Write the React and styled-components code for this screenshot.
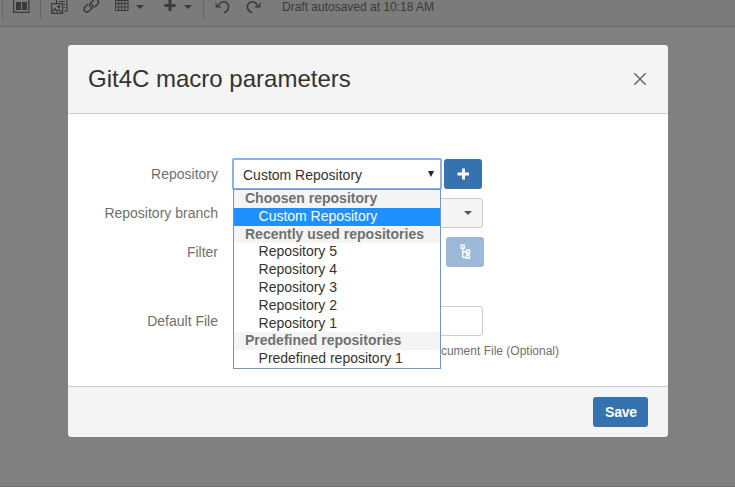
import React from "react";
import styled, { createGlobalStyle } from "styled-components";

const GlobalStyle = createGlobalStyle`
  * { box-sizing: border-box; }
  body { margin: 0; background: #808080; font-family: "Liberation Sans", Arial, sans-serif; font-size: 14px; overflow: hidden; }
`;

const Page = styled.div`
  display: flex;
  flex-direction: column;
  width: 735px;
  height: 487px;
  background: #808080;
  border-bottom: 1px solid #747474;
`;

const Toolbar = styled.div`
  display: flex;
  align-items: flex-start;
  height: 27px;
  flex: none;
  background: #7b7b7b;
  border-bottom: 1px solid #666;
  color: #3a3a3a;
`;

const ToolIcon = styled.svg`
  display: block;
  flex: none;
  width: ${(p) => p.$w}px;
  height: 20px;
  margin-left: ${(p) => p.$gap}px;
`;

const Divider = styled.span`
  flex: none;
  width: 1px;
  height: 19px;
  margin-left: ${(p) => p.$gap}px;
  background: #666;
`;

const DraftStatus = styled.span`
  margin-left: 21px;
  font-size: 12px;
  line-height: 14px;
  white-space: nowrap;
  color: #3a3a3a;
`;

const Dialog = styled.section`
  display: flex;
  flex-direction: column;
  width: 600px;
  height: 392px;
  margin: 18px 0 0 68px;
  border-radius: 4px;
  overflow: hidden;
  background: #fff;
`;

const DialogHeader = styled.header`
  display: flex;
  align-items: center;
  justify-content: space-between;
  height: 69px;
  padding: 0 20px;
  background: #f4f4f4;
  border-bottom: 1px solid #ccc;
`;

const Title = styled.h1`
  margin: 0;
  font-size: 24px;
  font-weight: 400;
  line-height: 28px;
  color: #333;
`;

const CloseButton = styled.button`
  display: flex;
  width: 16px;
  height: 16px;
  padding: 0;
  border: 0;
  background: none;
  color: #666;
`;

const Form = styled.div`
  display: flex;
  flex-direction: column;
  height: 272px;
  padding-top: 44px;
`;

const Row = styled.div`
  display: flex;
  align-items: center;
  height: 32px;
  margin-bottom: ${(p) => p.$after}px;
`;

const Label = styled.label`
  width: 150px;
  margin-right: 14px;
  text-align: right;
  line-height: 16px;
  color: #707070;
`;

const SelectBox = styled.div`
  position: relative;
  display: flex;
  align-items: center;
  justify-content: space-between;
  width: 210px;
  height: 32px;
  padding: 2px 6px 0 9px;
  border: 2px solid #8eb0e7;
  border-radius: 2px;
  color: #333;
`;

const SelectArrow = styled.svg`
  width: 6px;
  height: 6px;
  margin-bottom: 2px;
`;

const Menu = styled.div`
  position: absolute;
  z-index: 2;
  top: 29px;
  left: -1px;
  width: 208px;
  height: 180px;
  border: 1px solid #7196ce;
  background: #fff;
`;

const GroupName = styled.div`
  height: 17.8px;
  padding-left: 11px;
  line-height: 17px;
  font-weight: 700;
  white-space: nowrap;
  background: #f4f4f4;
  color: #707070;
`;

const Option = styled.div`
  height: 17.8px;
  padding-left: 24.6px;
  line-height: 17px;
  letter-spacing: -0.02px;
  white-space: nowrap;
  background: ${(p) => (p.$active ? "#1e90ff" : "#fff")};
  color: ${(p) => (p.$active ? "#fff" : "#333")};
`;

const IconButton = styled.button`
  display: flex;
  align-items: center;
  justify-content: center;
  width: 38px;
  height: 30px;
  padding: 0;
  margin-left: ${(p) => p.$gap}px;
  border: 0;
  border-radius: 3px;
  background: ${(p) => (p.$muted ? "#9cb9d9" : "#3572b0")};
  color: #fff;
`;

const Field = styled.div`
  display: flex;
  align-items: center;
  justify-content: flex-end;
  width: 250px;
  height: 30px;
  margin-left: 1px;
  padding-right: 10px;
  border: 1px solid #ccc;
  border-radius: 3px;
  background: ${(p) => (p.$shaded ? "#f4f4f4" : "#fff")};
  color: #555;
`;

const Hint = styled.p`
  margin: 0 109px 0 0;
  text-align: right;
  font-size: 12px;
  line-height: 14px;
  color: #707070;
`;

const DialogFooter = styled.footer`
  display: flex;
  align-items: center;
  justify-content: flex-end;
  height: 51px;
  padding-right: 20px;
  border-top: 1px solid #ccc;
  background: #f4f4f4;
`;

const SaveButton = styled.button`
  width: 55px;
  height: 30px;
  padding: 0 0 0 1px;
  border: 0;
  border-radius: 3px;
  background: #3572b0;
  color: #fff;
  font: 700 14px "Liberation Sans", Arial, sans-serif;
  letter-spacing: -0.2px;
`;

const Caret = ({ gap }) => (
  <ToolIcon $w={8} $gap={gap} viewBox="0 0 8 20"><path d="M0 5h8L4 9z" fill="currentColor" /></ToolIcon>
);

const groups = [
  { name: "Choosen repository", items: ["Custom Repository"] },
  { name: "Recently used repositories", items: ["Repository 5", "Repository 4", "Repository 3", "Repository 2", "Repository 1"] },
  { name: "Predefined repositories", items: ["Predefined repository 1"] },
];

function EditorToolbar() {
  return (
    <Toolbar>
      <Divider $gap={2} />
      <ToolIcon $w={17} $gap={10} viewBox="0 0 17 20">
        <path d="M.6-2v14.4h15.3V-2" fill="none" stroke="currentColor" strokeWidth="1.2" />
        <path d="M3 2h5v8H3zM9 2h5v8H9z" fill="currentColor" />
      </ToolIcon>
      <Divider $gap={10} />
      <ToolIcon $w={17} $gap={10} viewBox="0 0 17 20" fill="none" stroke="currentColor" strokeWidth="1.2">
        <path d="M5.5 3v-4h10.4v12H13M8 1.5h6M12.5 4.5h1.8M12.5 7.5h1.8" />
        <rect x=".6" y="3.6" width="11" height="9.8" />
        <path d="m1 12 3-3.4 2 3 2-2 3 3.4" /><circle cx="7.9" cy="6.6" r="1" />
      </ToolIcon>
      <ToolIcon $w={17} $gap={15} viewBox="0 0 17 20" fill="none" stroke="currentColor" strokeWidth="1.6" strokeLinecap="round">
        <path d="M7.4 6.8C6.2 5.6 6.3 4.3 7.4 3.2l3-3c2.8-2.8 7 .9 4.3 3.8L12 6.7" />
        <path d="M9 4.3c1.2 1.2 1.1 2.6 0 3.7l-3 3c-2.8 2.8-6.9-1-4.2-3.8l2.5-2.5" />
      </ToolIcon>
      <ToolIcon $w={14} $gap={15} viewBox="0 0 14 20" fill="none" stroke="currentColor" strokeWidth="1">
        <path d="M.5 .5h12.5v10H.5zM0 3.5h13.5M0 7h13.5M3.7.5v10M6.8.5v10M9.9.5v10" />
      </ToolIcon>
      <Caret gap={7} />
      <ToolIcon $w={12} $gap={20} viewBox="0 0 12 20" fill="none" stroke="currentColor" strokeWidth="3">
        <path d="M6 0v11M.5 5.5h11" />
      </ToolIcon>
      <Caret gap={8} />
      <Divider $gap={11} />
      <ToolIcon $w={15} $gap={11} viewBox="0 0 15 20" fill="none" stroke="currentColor" strokeWidth="1.6">
        <path d="M3.2 5.5C5.2 1.6 9.4.7 11.9 3c3.2 3.1 1.5 8.5-2.9 9.6" /><path d="M.6 1.5v6h6L4.8 5.7 3.5 6.2 2 5z" fill="currentColor" stroke="none" />
      </ToolIcon>
      <ToolIcon $w={15} $gap={16} viewBox="0 0 15 20" fill="none" stroke="currentColor" strokeWidth="1.6">
        <path d="M11.8 5.5C9.8 1.6 5.6.7 3.1 3-.1 6.1 1.6 11.5 6 12.6" /><path d="M14.4 1.5v6h-6l1.8-1.8 1.3.5L13 5z" fill="currentColor" stroke="none" />
      </ToolIcon>
      <DraftStatus>Draft autosaved at 10:18 AM</DraftStatus>
    </Toolbar>
  );
}

export default function App() {
  return (
    <Page>
      <GlobalStyle />
      <EditorToolbar />
      <Dialog>
        <DialogHeader>
          <Title>Git4C macro parameters</Title>
          <CloseButton aria-label="Close">
            <svg width="16" height="16" viewBox="0 0 16 16"><path d="m2.3 2.3 11.4 11.4m0-11.4L2.3 13.7" stroke="currentColor" strokeWidth="1.5" /></svg>
          </CloseButton>
        </DialogHeader>
        <Form>
          <Row $after={7}>
            <Label>Repository</Label>
            <SelectBox>
              <span>Custom Repository</span>
              <SelectArrow viewBox="0 0 6 6"><path d="M0 0h6L3 6z" fill="#222" /></SelectArrow>
              <Menu>
                {groups.map((group, g) => (
                  <React.Fragment key={group.name}>
                    <GroupName>{group.name}</GroupName>
                    {group.items.map((item) => <Option key={item} $active={g === 0}>{item}</Option>)}
                  </React.Fragment>
                ))}
              </Menu>
            </SelectBox>
            <IconButton $gap={2} aria-label="Add repository">
              <svg width="12" height="12" viewBox="0 0 12 12"><path d="M6.5 .5v11M.5 6h12" stroke="currentColor" strokeWidth="3" /></svg>
            </IconButton>
          </Row>
          <Row $after={7}>
            <Label>Repository branch</Label>
            <Field $shaded>
              <svg width="8" height="4" viewBox="0 0 8 4"><path d="M0 0h8L4 4z" fill="currentColor" /></svg>
            </Field>
          </Row>
          <Row $after={37}>
            <Label>Filter</Label>
            <IconButton $gap={214} $muted aria-label="Browse files">
              <svg width="11" height="16" viewBox="0 0 11 16" fill="none" stroke="currentColor" strokeWidth="1.4">
                <path d="M1.2 1.2h3v3h-3zM6.5 6.2h3v3h-3zM6.5 11.2h3v3h-3zM2.7 4.2v9.2h3.8M2.7 7.7h3.8" />
              </svg>
            </IconButton>
          </Row>
          <Row $after={7}>
            <Label>Default File</Label>
            <Field />
          </Row>
          <Hint>Document File (Optional)</Hint>
        </Form>
        <DialogFooter><SaveButton>Save</SaveButton></DialogFooter>
      </Dialog>
    </Page>
  );
}
